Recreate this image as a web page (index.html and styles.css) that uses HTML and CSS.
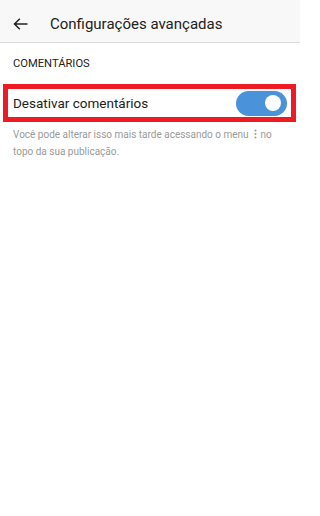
FILE: index.html
```html
<!DOCTYPE html>
<html lang="pt">
<head>
<meta charset="utf-8">
<link rel="stylesheet" href="styles.css">
</head>
<body>
<header class="topbar">
  <svg class="back" width="15" height="12" viewBox="0 0 15 12"><path d="M14.5 6H1.5M6.8 0.8L1.5 6l5.3 5.2" fill="none" stroke="#222" stroke-width="1.5"/></svg>
  <h1 class="title">Configurações avançadas</h1>
</header>
<main>
  <h2 class="section">COMENTÁRIOS</h2>
  <div class="row">
    <span class="label">Desativar comentários</span>
    <span class="toggle"><span class="knob"></span></span>
  </div>
  <p class="hint"><span>Você pode alterar isso mais tarde acessando o menu</span><svg class="dots" width="3" height="10" viewBox="0 0 3 10"><circle cx="1.5" cy="1.5" r="1" fill="#9a9a9a"/><circle cx="1.5" cy="5" r="1" fill="#9a9a9a"/><circle cx="1.5" cy="8.5" r="1" fill="#9a9a9a"/></svg><span>no</span><br><span>topo da sua publicação.</span></p>
</main>
</body>
</html>
```
FILE: styles.css
```css
html, body { margin: 0; padding: 0; background: #fff; }
body { font-family: Roboto, "Noto Sans", sans-serif; color: #262626; width: 300px; }
.topbar {
  height: 43px;
  background: #f8f8f8;
  border-bottom: 1px solid #dcdcdc;
  display: flex;
  align-items: center;
  box-sizing: border-box;
  padding-top: 5px;
}
.back { margin-left: 13px; width: 15px; height: 12px; }
.title { margin: 0 0 0 22px; font-size: 15px; font-weight: 400; color: #222; line-height: 18px; }
.section { margin: 0; padding: 14px 0 0 13px; font-size: 11.2px; font-weight: 400; color: #222; line-height: 14px; }
.row {
  margin: 13px 4px 0 3px;
  border: 5px solid #ed1c24;
  height: 28px;
  display: flex;
  align-items: center;
  justify-content: space-between;
  padding: 0 4px 0 5px;
}
.label { font-size: 13.5px; color: #222; line-height: 16px; }
.toggle {
  width: 51px; height: 25px; border-radius: 12.5px; background: #4a92d9;
  display: flex; align-items: center; justify-content: flex-end; padding-right: 6px; box-sizing: border-box;
}
.knob { width: 16px; height: 16px; border-radius: 50%; background: #fff; }
.hint { margin: 4px 0 0 13px; width: 275px; font-size: 10px; color: #9a9a9a; line-height: 17px; white-space: nowrap; }
.dots { vertical-align: -1px; margin: 0 4px 0 5px; }
```
